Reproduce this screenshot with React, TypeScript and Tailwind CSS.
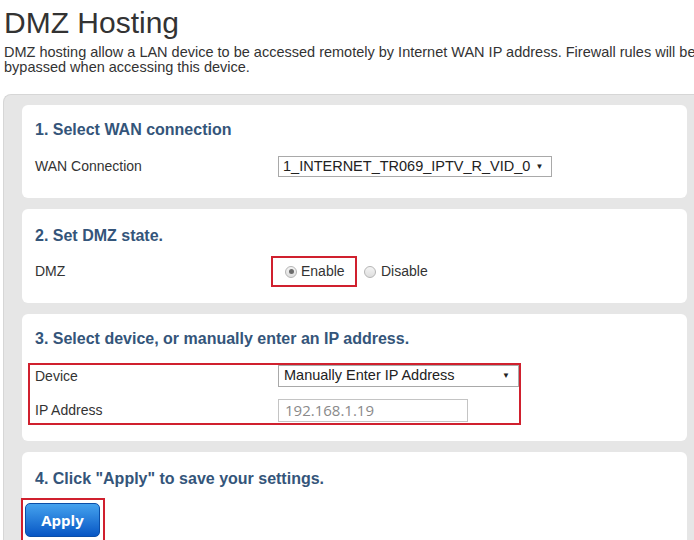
import React from "react";

const font = { fontFamily: '"Liberation Sans", Arial, sans-serif' };

const Radio = ({ checked }: { checked?: boolean }) => (
  <span className="inline-flex items-center justify-center w-[12px] h-[12px] rounded-full border border-[#b5b5b5] bg-gradient-to-b from-[#f4f4f4] to-[#dedede]">
    {checked && <span className="w-[5px] h-[5px] rounded-full bg-[#6b6b6b]" />}
  </span>
);

const Heading = ({ children }: { children: React.ReactNode }) => (
  <p className="text-[16px] leading-[18px] font-bold text-[#34557a]">{children}</p>
);

export default function App() {
  return (
    <div className="w-[694px] h-[540px] overflow-hidden bg-white text-[#333]" style={font}>
      <div className="pl-[4px] pt-[7px]">
        <h1 className="text-[30px] leading-[32px] text-[#333]">DMZ Hosting</h1>
        <p className="text-[14.5px] leading-[15px] mt-[6px] whitespace-nowrap">
          DMZ hosting allow a LAN device to be accessed remotely by Internet WAN IP address. Firewall rules will be
          <br />
          bypassed when accessing this device.
        </p>
      </div>

      <div className="ml-[3px] mt-[19px] w-[720px] h-[460px] bg-[#e6e6e6] border-l border-t border-[#d6d6d6] rounded-tl-[8px] pl-[18px] pt-[10px] flex flex-col gap-[11px]">
        {/* card 1 */}
        <div className="w-[665px] h-[93px] bg-white rounded-[6px] pl-[13px] pt-[16px]">
          <Heading>1. Select WAN connection</Heading>
          <div className="flex items-center mt-[17px] h-[21px] text-[14px]">
            <span className="w-[243px]">WAN Connection</span>
            <div className="w-[274px] h-[21px] border border-[#a9a9a9] bg-white flex items-center pl-[4px] text-[14.5px] text-[#222]">
              1_INTERNET_TR069_IPTV_R_VID_0
              <span className="text-[8px] ml-[5px]">▼</span>
            </div>
          </div>
        </div>

        {/* card 2 */}
        <div className="w-[665px] h-[94px] bg-white rounded-[6px] pl-[13px] pt-[18px]">
          <Heading>2. Set DMZ state.</Heading>
          <div className="flex items-center mt-[11px] h-[31px] text-[14px]">
            <span className="w-[236px]">DMZ</span>
            <div className="h-[31px] w-[86px] border-2 border-[#d0202e] flex items-center pl-[12px] gap-[4px]">
              <Radio checked />
              <span>Enable</span>
            </div>
            <div className="flex items-center gap-[5px] ml-[7px]">
              <Radio />
              <span>Disable</span>
            </div>
          </div>
        </div>

        {/* card 3 */}
        <div className="w-[665px] h-[127px] bg-white rounded-[6px] pl-[13px] pt-[16px]">
          <Heading>3. Select device, or manually enter an IP address.</Heading>
          <div className="mt-[15px] -ml-[7px] w-[493px] h-[62px] border-2 border-[#d0202e] pl-[5px] flex flex-col text-[14px]">
            <div className="flex items-center h-[22px]">
              <span className="w-[243px]">Device</span>
              <div className="w-[241px] h-[22px] border border-[#a9a9a9] bg-white flex items-center justify-between pl-[5px] pr-[8px] text-[14.5px] text-[#222]">
                <span>Manually Enter IP Address</span>
                <span className="text-[8px]">▼</span>
              </div>
            </div>
            <div className="flex items-center h-[23px] mt-[12px]">
              <span className="w-[243px]">IP Address</span>
              <div className="w-[190px] h-[23px] border border-[#c4c4c4] bg-white flex items-center pl-[6px] text-[15px] text-[#8a8a8a]" style={{ fontFamily: '"Open Sans", sans-serif' }}>
                192.168.1.19
              </div>
            </div>
          </div>
        </div>

        {/* card 4 */}
        <div className="w-[665px] h-[100px] bg-white rounded-[6px] pl-[13px] pt-[18px]">
          <Heading>4. Click "Apply" to save your settings.</Heading>
          <div className="mt-[10px] -ml-[14px] w-[84px] h-[44px] border-2 border-[#d0202e] pl-[2px] pt-[3px]">
            <button className="w-[75px] h-[34px] rounded-[5px] bg-gradient-to-b from-[#45a2ee] to-[#0756c4] border border-[#0a4ea8] text-white font-bold text-[15px]" style={{ fontFamily: '"Open Sans", sans-serif' }}>
              Apply
            </button>
          </div>
        </div>
      </div>
    </div>
  );
}
